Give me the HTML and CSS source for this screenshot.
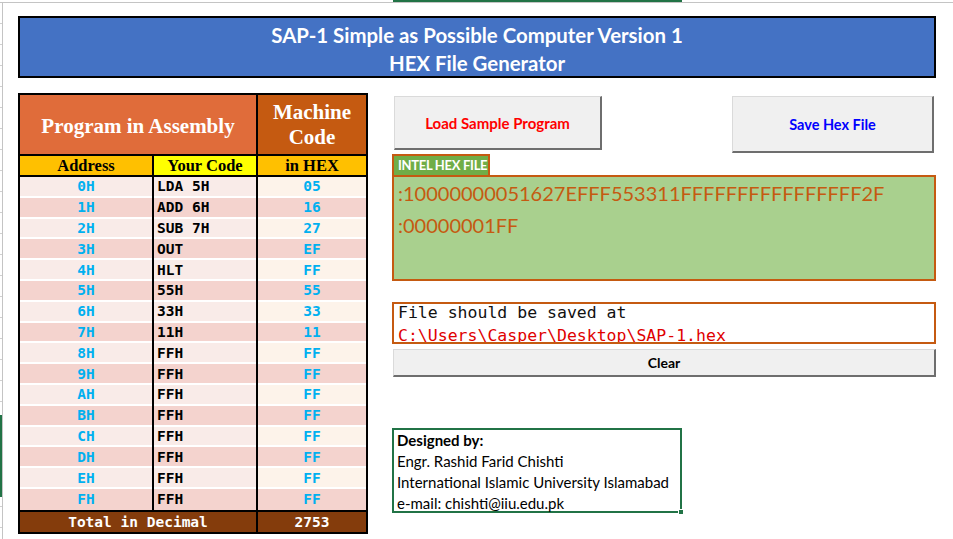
FILE: index.html
```html
<!DOCTYPE html>
<html lang="en">
<head>
<meta charset="utf-8">
<title>SAP-1 HEX File Generator</title>
<link rel="stylesheet" href="styles.css">
</head>
<body>
<div class="frame">
  <div class="colhdr"><span class="colsel"></span></div>
  <div class="bodyrow">
    <div class="rowhdr"><span class="rowsel"></span></div>
    <main class="sheet">
      <header class="title">
        <div>SAP-1 Simple as Possible Computer Version 1</div>
        <div>HEX File Generator</div>
      </header>
      <div class="content">
        <section class="tbl">
          <div class="h-asm">Program in Assembly</div>
          <div class="h-mc"><span>Machine</span><span>Code</span></div>
          <div class="sh sh-o">Address</div>
          <div class="sh sh-y">Your Code</div>
          <div class="sh sh-o">in HEX</div>
          <div class="rows">
            <div class="row"><div class="c addr">0H</div><div class="c code">LDA 5H</div><div class="c hex">05</div></div>
            <div class="row"><div class="c addr">1H</div><div class="c code">ADD 6H</div><div class="c hex">16</div></div>
            <div class="row"><div class="c addr">2H</div><div class="c code">SUB 7H</div><div class="c hex">27</div></div>
            <div class="row"><div class="c addr">3H</div><div class="c code">OUT</div><div class="c hex">EF</div></div>
            <div class="row"><div class="c addr">4H</div><div class="c code">HLT</div><div class="c hex">FF</div></div>
            <div class="row"><div class="c addr">5H</div><div class="c code">55H</div><div class="c hex">55</div></div>
            <div class="row"><div class="c addr">6H</div><div class="c code">33H</div><div class="c hex">33</div></div>
            <div class="row"><div class="c addr">7H</div><div class="c code">11H</div><div class="c hex">11</div></div>
            <div class="row"><div class="c addr">8H</div><div class="c code">FFH</div><div class="c hex">FF</div></div>
            <div class="row"><div class="c addr">9H</div><div class="c code">FFH</div><div class="c hex">FF</div></div>
            <div class="row"><div class="c addr">AH</div><div class="c code">FFH</div><div class="c hex">FF</div></div>
            <div class="row"><div class="c addr">BH</div><div class="c code">FFH</div><div class="c hex">FF</div></div>
            <div class="row"><div class="c addr">CH</div><div class="c code">FFH</div><div class="c hex">FF</div></div>
            <div class="row"><div class="c addr">DH</div><div class="c code">FFH</div><div class="c hex">FF</div></div>
            <div class="row"><div class="c addr">EH</div><div class="c code">FFH</div><div class="c hex">FF</div></div>
            <div class="row"><div class="c addr">FH</div><div class="c code">FFH</div><div class="c hex">FF</div></div>
          </div>
          <div class="foot f1">Total in Decimal</div>
          <div class="foot f2">2753</div>
        </section>
        <section class="panel">
          <div class="btns">
            <button class="btn btn-load">Load Sample Program</button>
            <button class="btn btn-save">Save Hex File</button>
          </div>
          <div class="hexlabel">INTEL HEX FILE</div>
          <div class="hexbox">
            <div>:10000000051627EFFF553311FFFFFFFFFFFFFFFF2F</div>
            <div>:00000001FF</div>
          </div>
          <div class="savedbox">
            <div class="savedtext">
              <div>File should be saved at</div>
              <div class="path">C:\Users\Casper\Desktop\SAP-1.hex</div>
            </div>
          </div>
          <button class="btn btn-clear">Clear</button>
          <div class="designed">
            <div class="dtitle">Designed by:</div>
            <div>Engr. Rashid Farid Chishti</div>
            <div>International Islamic University Islamabad</div>
            <div>e-mail: chishti@iiu.edu.pk</div>
            <span class="handle"></span>
          </div>
        </section>
      </div>
    </main>
  </div>
</div>
</body>
</html>
```
FILE: styles.css
```css
* { box-sizing: border-box; }
html, body { margin: 0; padding: 0; background: #fff; }
body { font-family: Lato, "Open Sans", sans-serif; color: #000; }

.frame { width: 953px; height: 539px; overflow: hidden; display: flex; flex-direction: column; }

.colhdr {
  height: 3px; flex: 0 0 3px; display: flex;
  border-bottom: 1px solid #c4c4c4;
}
.colsel { margin-left: 393px; width: 289px; height: 2px; background: #217346; }

.bodyrow { flex: 1; display: flex; }
.rowhdr {
  width: 3px; flex: 0 0 3px; display: flex; flex-direction: column;
  border-right: 1px solid #c4c4c4;
  background: repeating-linear-gradient(to bottom, transparent 0 20px, #d0d0d0 20px 21px);
}
.rowsel { margin-top: 412px; height: 82px; width: 2px; background: #217346; }

.sheet { flex: 1; padding: 13px 0 0 15px; }

.title {
  width: 918px; height: 62px;
  border: 2px solid #000; background: #4472c4; color: #fff;
  font-weight: 700; font-size: 20.4px; line-height: 28px; text-align: center;
  padding-top: 3px;
}

.content { display: flex; align-items: flex-start; margin-top: 15px; }

/* ---------- table ---------- */
.tbl {
  width: 350px; padding: 2px; background: #000;
  display: grid; grid-template-columns: 132px 102px 108px; column-gap: 2px;
}
.h-asm, .h-mc {
  height: 59px; margin-bottom: 2px; color: #fff;
  font-family: "Liberation Serif", "DejaVu Serif", serif; font-weight: 700; font-size: 21px;
  display: flex; align-items: center; justify-content: center;
}
.h-asm { grid-column: span 2; background: #e06c3a; padding-top: 4px; }
.h-mc { background: #c55a11; flex-direction: column; line-height: 25px; }
.sh {
  height: 19px; margin-bottom: 2px;
  font-family: "Liberation Serif", "DejaVu Serif", serif; font-weight: 700; font-size: 16.5px;
  display: flex; align-items: center; justify-content: center; line-height: 19px;
}
.sh-o { background: #ffc000; }
.sh-y { background: #ffff00; }

.rows {
  grid-column: 1 / -1; margin-bottom: 2px;
  display: grid; grid-template-columns: 132px 102px 108px; column-gap: 2px;
}
.row { display: contents; }
.c {
  height: 20.8px; border-bottom: 2px solid #fff;
  display: flex; align-items: center;
  font-family: "DejaVu Sans Mono", "Liberation Mono", monospace; font-weight: 700; font-size: 14.5px;
  background: #f9ebe8;
}
.row:nth-child(even) .c { background: #f4d3ce; }
.row:nth-child(odd) .hex { background: #fdf3ea; }
.row:last-child .c { border-bottom: 0; height: 21px; }
.addr { justify-content: center; color: #00b0f0; }
.hex { justify-content: center; color: #00b0f0; }
.code { padding-left: 3px; color: #000; }

.foot {
  height: 20px; background: #843c0c; color: #fff;
  font-family: "DejaVu Sans Mono", "Liberation Mono", monospace; font-weight: 700; font-size: 14.5px;
  display: flex; align-items: center; justify-content: center;
}
.f1 { grid-column: span 2; }

/* ---------- right panel ---------- */
.panel { width: 544px; margin-left: 24px; display: flex; flex-direction: column; }

.btns { height: 61px; display: flex; align-items: flex-start; justify-content: space-between; }
.btn {
  font-family: Lato, "Open Sans", sans-serif; font-weight: 700; font-size: 14.5px;
  background: #f0f0f0; padding: 0;
  border: 1px solid #dadada; border-right: 2px solid #6e6e6e; border-bottom: 2px solid #6e6e6e;
}
.btn-load { margin: 3px 0 0 2px; width: 208px; height: 54px; color: #ff0000; font-size: 15px; }
.btn-save { margin: 3px 2px 0 0; width: 202px; height: 57px; color: #0000ff; }

.hexlabel {
  align-self: flex-start; width: 98px; height: 21px;
  border: 2px solid #c55a11; border-bottom: 0;
  background: #70ad47; color: #fff;
  font-weight: 700; font-size: 13px; letter-spacing: -0.3px; line-height: 19px; padding-left: 4px;
  white-space: nowrap;
}
.hexbox {
  height: 106px; border: 2px solid #c55a11; background: #a9d08e;
  color: #c55a11; font-size: 20px; line-height: 32px; padding-left: 4px;
}

.savedbox {
  margin-top: 21px; height: 42px; border: 2px solid #c55a11; background: #fff;
  overflow: hidden; padding-left: 4px;
  font-family: "DejaVu Sans Mono", "Liberation Mono", monospace; font-size: 16.5px; line-height: 23px;
}
.savedtext { margin-top: -3px; color: #111; }
.path { color: #e00000; }

.btn-clear { margin: 5px 0 0 1px; width: 543px; height: 28px; color: #000; font-size: 14px; }

.designed {
  position: relative;
  margin-top: 51px; width: 290px; height: 85px;
  border: 2px solid #217346; padding-left: 3px;
  font-size: 15px; line-height: 21px; color: #000;
}
.dtitle { font-weight: 700; }
.handle {
  position: absolute; right: -4px; bottom: -4px;
  width: 6px; height: 6px; background: #217346; border: 1px solid #fff;
}
```
